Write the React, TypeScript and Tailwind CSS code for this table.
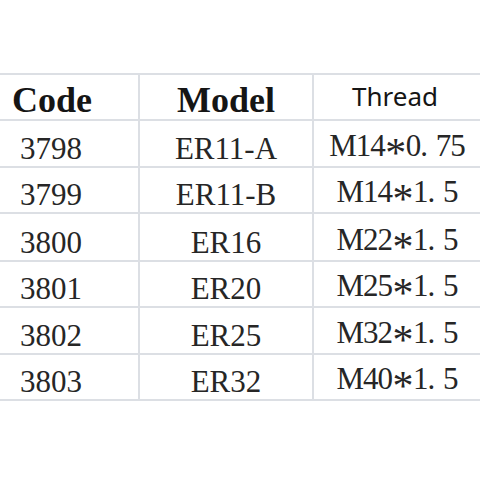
import React from "react";

const rows: { code: string; model: string; thread: [string, string, string]; h: string }[] = [
  { code: "3798", model: "ER11-A", thread: ["M14", "0", "75"], h: "h-[47px]" },
  { code: "3799", model: "ER11-B", thread: ["M14", "1", "5"], h: "h-[46px]" },
  { code: "3800", model: "ER16", thread: ["M22", "1", "5"], h: "h-[48px]" },
  { code: "3801", model: "ER20", thread: ["M25", "1", "5"], h: "h-[46px]" },
  { code: "3802", model: "ER25", thread: ["M32", "1", "5"], h: "h-[47px]" },
  { code: "3803", model: "ER32", thread: ["M40", "1", "5"], h: "h-[46px]" },
];

function Thread({ t }: { t: [string, string, string] }) {
  return (
    <span className="whitespace-nowrap tracking-[-1px]">
      {t[0]}
      <span className="relative top-[0.26em] inline-block w-[0.5em] text-center text-[1.35em] leading-none">*</span>
      {t[1]}
      <span className="inline-block w-[0.5em] text-left">.</span>
      {t[2]}
    </span>
  );
}

export default function App() {
  return (
    <div className="w-[480px] h-[480px] bg-white overflow-hidden pt-[73px]">
      <div className="border-t-2 border-[#dcdfe4]">
        <div className="grid grid-cols-[140px_174px_166px] h-[46px] border-b-2 border-[#dcdfe4] text-[#151515]">
          <div className="border-r-2 border-[#dcdfe4] flex items-end pl-[12px] pb-[1px] font-['Liberation_Serif',serif] font-bold text-[36px] leading-none">
            Code
          </div>
          <div className="border-r-2 border-[#dcdfe4] flex items-end justify-center pb-[1px] font-['Liberation_Serif',serif] font-bold text-[36px] leading-none">
            Model
          </div>
          <div className="flex items-end justify-center pb-[10px] pr-[4px] font-['Noto_Sans',sans-serif] text-[26px] leading-none">
            Thread
          </div>
        </div>
        {rows.map((r) => (
          <div
            key={r.code}
            className={`grid grid-cols-[140px_174px_166px] ${r.h} border-b-2 border-[#dcdfe4] text-[#262626] font-['Liberation_Serif',serif] text-[31px] leading-none`}
          >
            <div className="border-r-2 border-[#dcdfe4] flex items-end pl-[20px] pb-[2px]">{r.code}</div>
            <div className="border-r-2 border-[#dcdfe4] flex items-end justify-center pb-[2px]">{r.model}</div>
            <div className="flex items-end justify-center pb-[2px]">
              <Thread t={r.thread} />
            </div>
          </div>
        ))}
      </div>
    </div>
  );
}
